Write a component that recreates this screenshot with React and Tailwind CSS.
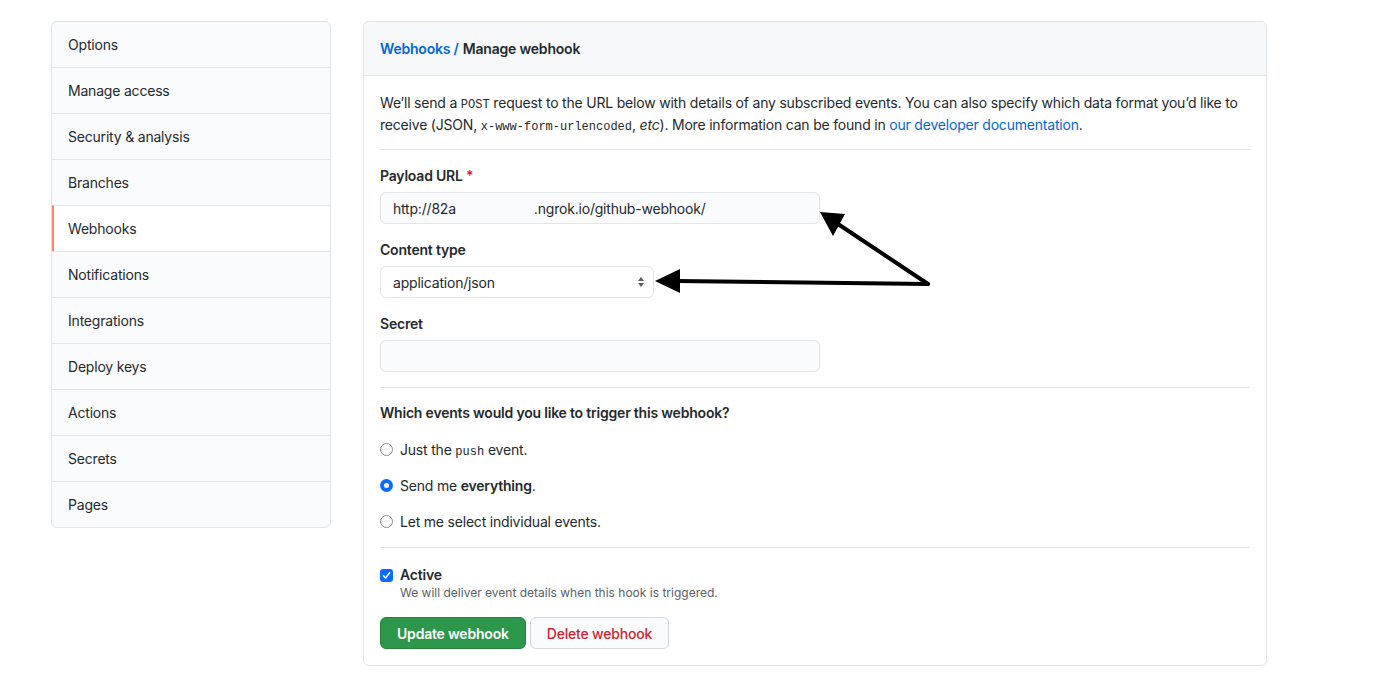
import React from 'react';

const navItems = [
  'Options',
  'Manage access',
  'Security & analysis',
  'Branches',
  'Webhooks',
  'Notifications',
  'Integrations',
  'Deploy keys',
  'Actions',
  'Secrets',
  'Pages',
];

const mono = 'font-["Liberation_Mono","DejaVu_Sans_Mono",monospace] text-[12px] leading-none tracking-normal';

const Sidebar = () => (
  <nav className="w-[280px] shrink-0 self-start rounded-md border border-[#e1e4e8] bg-[#fafbfc] overflow-hidden">
    {navItems.map((item, i) => {
      const selected = item === 'Webhooks';
      return (
        <div
          key={item}
          className={`flex items-center px-4 text-[14px] text-[#24292e] ${
            i > 0 ? 'h-[46px] border-t border-[#e1e4e8]' : 'h-[45px]'
          } ${selected ? 'bg-white border-l-2 border-l-[#f9826c] pl-[14px]' : ''}`}
        >
          {item}
        </div>
      );
    })}
  </nav>
);

const Radio = ({ checked, children }) => (
  <label className="flex items-center gap-[7px] h-[20px] text-[14px] text-[#24292e]">
    <span
      className={`w-[13px] h-[13px] rounded-full flex items-center justify-center ${
        checked ? 'bg-[#0a6cff]' : 'border border-[#8c8c8c] bg-white'
      }`}
    >
      {checked && <span className="w-[5px] h-[5px] rounded-full bg-white" />}
    </span>
    <span>{children}</span>
  </label>
);

const Arrows = () => (
  <svg className="absolute left-0 top-0 pointer-events-none" width="1386" height="696">
    <g stroke="#000" strokeWidth="4" strokeLinecap="round" fill="none">
      <line x1="928" y1="284" x2="838" y2="224" />
      <line x1="928" y1="284" x2="676" y2="281" />
    </g>
    <polygon points="820,212 845,214 833,236" fill="#000" />
    <polygon points="655,281 680,269 680,293" fill="#000" />
  </svg>
);

export default function App() {
  return (
    <div className="relative min-h-[696px] bg-white font-['Inter','Liberation_Sans',sans-serif] tracking-[-0.2px] text-[#24292e]">
      <div className="flex gap-8 pl-[51px] pt-[21px]">
        <Sidebar />
        <main className="w-[904px] rounded-md border border-[#e1e4e8] bg-white">
          <div className="h-[54px] flex items-center px-4 bg-[#f6f8fa] border-b border-[#e1e4e8] rounded-t-md text-[14px] font-semibold">
            <span className="text-[#0366d6]">Webhooks /</span>
            <span className="ml-1">Manage webhook</span>
          </div>
          <div className="px-4 pt-[16px] pb-4">
            <p className="text-[14px] leading-[22px] pb-[13px] border-b border-[#e1e4e8]">
              We’ll send a <code className={mono}>POST</code> request to the URL below with details of any
              subscribed events. You can also specify which data format you’d like to receive (JSON,{' '}
              <code className={mono}>x-www-form-urlencoded</code>, <em>etc</em>). More information can be
              found in <a className="text-[#0366d6]">our developer documentation</a>.
            </p>

            <div className="pt-[16px] pb-[15px] border-b border-[#e1e4e8]">
              <div className="text-[14px] font-semibold leading-[20px]">
                Payload URL <span className="text-[#cb2431]">*</span>
              </div>
              <div className="mt-[6px] w-[440px] h-[32px] rounded-md border border-[#e1e4e8] bg-[#fafbfc] flex items-center px-3 text-[14px]">
                <span>http://82a</span>
                <span className="ml-[78px]">.ngrok.io/github-webhook/</span>
              </div>

              <div className="mt-[16px] text-[14px] font-semibold leading-[20px]">Content type</div>
              <div className="mt-[6px] w-[274px] h-[32px] rounded-md border border-[#e1e4e8] bg-white flex items-center justify-between pl-3 pr-2 text-[14px]">
                <span>application/json</span>
                <svg width="8" height="12" viewBox="0 0 8 12">
                  <path d="M4 1 L7 5 H1 Z M4 11 L1 7 H7 Z" fill="#586069" />
                </svg>
              </div>

              <div className="mt-[16px] text-[14px] font-semibold leading-[20px]">Secret</div>
              <div className="mt-[6px] w-[440px] h-[32px] rounded-md border border-[#e1e4e8] bg-[#fafbfc]" />
            </div>

            <div className="pt-[15px] pb-[16px] border-b border-[#e1e4e8]">
              <div className="text-[14px] font-semibold leading-[20px]">
                Which events would you like to trigger this webhook?
              </div>
              <div className="mt-[16px] flex flex-col gap-4">
                <Radio>
                  Just the <code className={mono}>push</code> event.
                </Radio>
                <Radio checked>
                  Send me <strong className="font-semibold">everything</strong>.
                </Radio>
                <Radio>Let me select individual events.</Radio>
              </div>
            </div>

            <div className="pt-[18px]">
              <div className="flex items-center gap-[7px]">
                <span className="w-[13px] h-[13px] rounded-[3px] bg-[#0a6cff] flex items-center justify-center">
                  <svg width="9" height="9" viewBox="0 0 9 9">
                    <path d="M1.5 4.8 L3.6 7 L7.6 1.8" stroke="#fff" strokeWidth="1.6" fill="none" strokeLinecap="round" strokeLinejoin="round" />
                  </svg>
                </span>
                <span className="text-[14px] font-semibold leading-[18px]">Active</span>
              </div>
              <div className="ml-[20px] text-[12px] leading-[18px] tracking-normal text-[#586069]">
                We will deliver event details when this hook is triggered.
              </div>
              <div className="mt-[15px] flex gap-1">
                <button className="h-[32px] px-4 rounded-md bg-[#2c974b] border border-[#22863a] text-white text-[14px] font-semibold">
                  Update webhook
                </button>
                <button className="h-[32px] px-4 rounded-md bg-[#fafbfc] border border-[#d1d5da] text-[#cb2431] text-[14px] font-medium">
                  Delete webhook
                </button>
              </div>
            </div>
          </div>
        </main>
      </div>
      <Arrows />
    </div>
  );
}
